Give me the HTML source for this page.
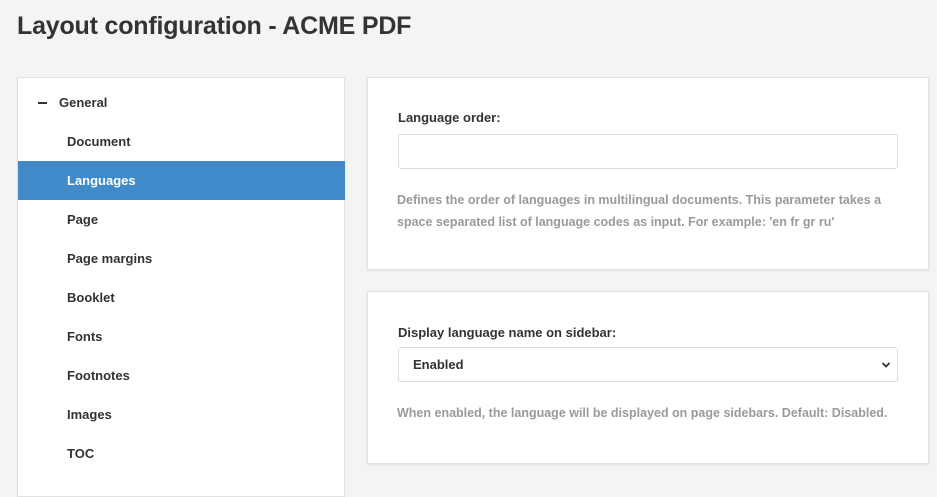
<!DOCTYPE html>
<html><head><meta charset="utf-8"><style>
*{box-sizing:border-box;margin:0;padding:0}
body{width:937px;height:471px;overflow:hidden;background:#f4f4f4;font-family:"Liberation Sans",sans-serif;color:#333;position:relative}
h1{position:absolute;left:17px;top:12px;font-size:25px;font-weight:bold;color:#333;letter-spacing:-0.2px}
.side{position:absolute;left:17px;top:77px;width:328px;height:420px;background:#fff;border:1px solid #e2e2e2;box-shadow:0 1px 2px rgba(0,0,0,.06)}
.it{position:absolute;left:0;width:327px;height:39px;line-height:39px;font-size:13px;font-weight:bold;color:#333;padding-left:49px}
.it.act{background:#418ac9;color:#fff}
.gen{padding-left:41px}
.gen:before{content:"";position:absolute;left:20px;top:19px;width:9px;height:2px;background:#333}
.card{position:absolute;left:367px;width:562px;background:#fff;border:1px solid #e2e2e2;box-shadow:0 1px 2px rgba(0,0,0,.08)}
.lbl{position:absolute;left:30px;font-size:13px;font-weight:bold;color:#333}
.inp{position:absolute;left:30px;width:500px;height:35px;border:1px solid #dcdcdc;border-radius:3px;background:#fff}
.help{position:absolute;left:29px;font-size:12.5px;font-weight:bold;color:#9a9a9a;line-height:22px;white-space:nowrap}
</style></head><body>
<h1>Layout configuration - ACME PDF</h1>
<div class="side">
<div class="it gen" style="top:5px">General</div>
<div class="it" style="top:44px">Document</div>
<div class="it act" style="top:83px">Languages</div>
<div class="it" style="top:122px">Page</div>
<div class="it" style="top:161px">Page margins</div>
<div class="it" style="top:200px">Booklet</div>
<div class="it" style="top:239px">Fonts</div>
<div class="it" style="top:278px">Footnotes</div>
<div class="it" style="top:317px">Images</div>
<div class="it" style="top:356px">TOC</div>
</div>
<div class="card" style="top:77px;height:193px">
<div class="lbl" style="top:32px">Language order:</div>
<div class="inp" style="top:56px"></div>
<div class="help" style="top:111px">Defines the order of languages in multilingual documents. This parameter takes a<br>space separated list of language codes as input. For example: 'en fr gr ru'</div>
</div>
<div class="card" style="top:291px;height:173px">
<div class="lbl" style="top:33px">Display language name on sidebar:</div>
<div class="inp" style="top:55px;padding-left:14px;line-height:33px;font-size:13px;font-weight:bold;color:#333">Enabled
<svg style="position:absolute;right:6px;top:13px" width="10" height="8" viewBox="0 0 10 8"><path d="M1.5 2 L5 5.5 L8.5 2" fill="none" stroke="#333" stroke-width="1.8"/></svg></div>
<div class="help" style="top:110px">When enabled, the language will be displayed on page sidebars. Default: Disabled.</div>
</div>
</body></html>
